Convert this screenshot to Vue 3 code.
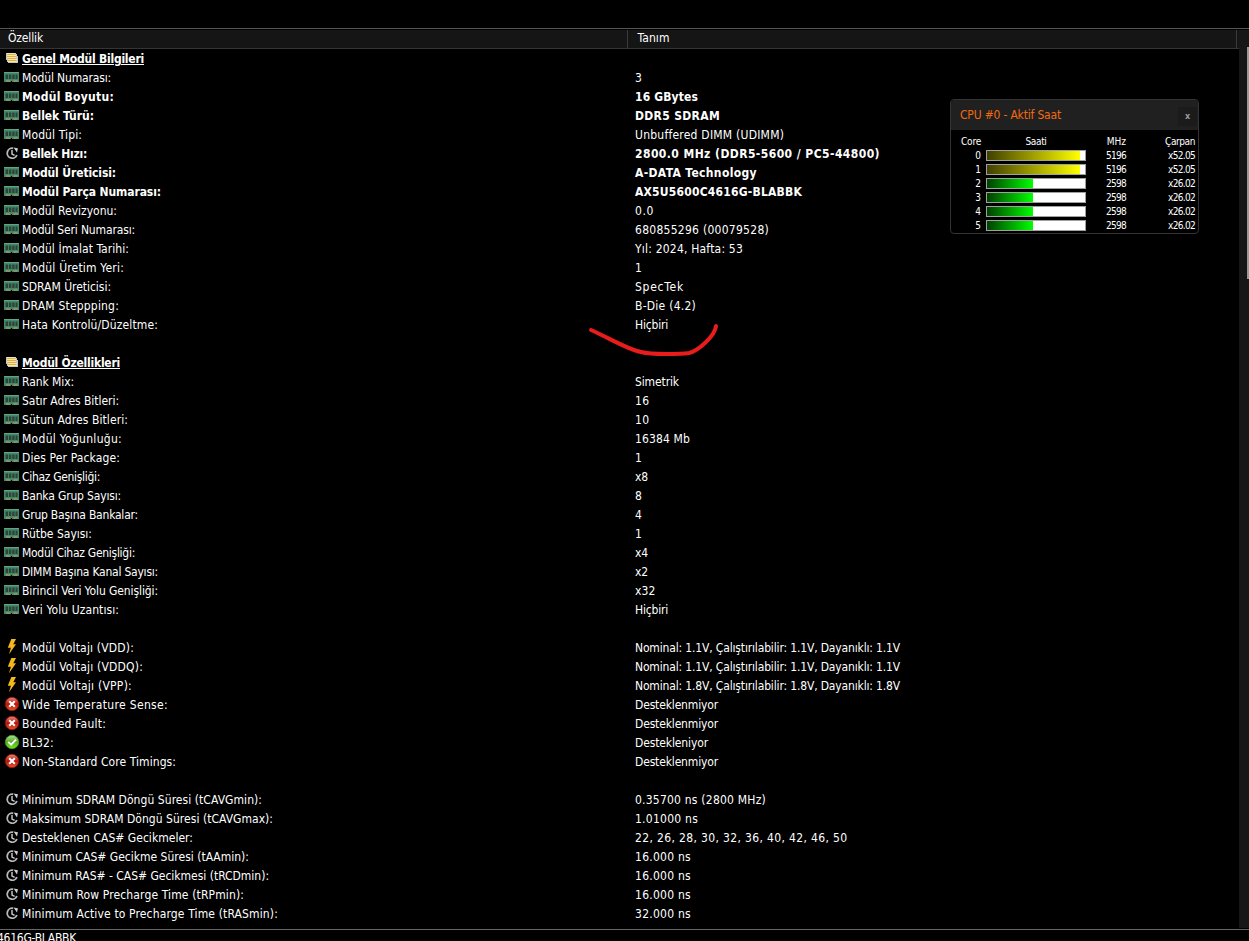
<template>
  <div class="window">
    <svg class="defs" width="0" height="0" aria-hidden="true">
      <defs>
        <linearGradient id="gRed" x1="0" y1="0" x2="0" y2="1">
          <stop offset="0" stop-color="#e48a80" />
          <stop offset="0.5" stop-color="#b81408" />
          <stop offset="1" stop-color="#e05a34" />
        </linearGradient>
        <linearGradient id="gGreen" x1="0" y1="0" x2="0" y2="1">
          <stop offset="0" stop-color="#b0dc9c" />
          <stop offset="0.5" stop-color="#4fae1f" />
          <stop offset="1" stop-color="#72e81c" />
        </linearGradient>
      </defs>
      <symbol id="ico-group" viewBox="0 0 16 16">
        <path d="M2 3h10v1h1v2h1v7H4v-1H3v-2H2z" fill="#c8c6be" />
        <path d="M3 3h8v1H3zM3 5h9v1H3zM3 7h9v1H3zM4 9h9v1H4zM4 11h9v1H4z" fill="#f4e6b4" />
        <path d="M3 4h8v1H3zM3 6h9v1H3zM4 8h8v1H4zM4 10h8v1H4z" fill="#dfb03c" />
      </symbol>
      <symbol id="ico-ram" viewBox="0 0 16 16">
        <path d="M0 3h15v10H8v-1H7v1H0z" fill="#3f8a68" />
        <path d="M0 3h15v1H0z" fill="#5fa582" />
        <path d="M1.6 5.4h2.4v4.6H1.6zM4.9 5.4h2.4v4.6H4.9zM8.2 5.4h2.4v4.6H8.2zM11.5 5.4h2.1v4.6h-2.1z" fill="#33413b" />
        <path d="M2 11.6h4v1H2zM9.5 11.6h4v1h-4z" fill="#d39a5a" />
      </symbol>
      <symbol id="ico-clock" viewBox="0 0 16 16">
        <path d="M9.2 3.3A5 5 0 1 0 12.9 10" fill="none" stroke="#b9b9b9" stroke-width="1.8" />
        <path d="M9.6 2.6L13.9 3.2L13 7.4L11.6 5.6z" fill="#cfcfcf" />
        <path d="M8 5v4l2.6 1.4" fill="none" stroke="#cfcfcf" stroke-width="1.4" />
      </symbol>
      <symbol id="ico-bolt" viewBox="0 0 16 16">
        <path d="M7.3 0H12L9.3 5.2H12L5 15.3l1.9-6.5H3.8z" fill="#f3b81c" />
      </symbol>
      <symbol id="ico-no" viewBox="0 0 16 16">
        <circle cx="8" cy="8" r="6.7" fill="url(#gRed)" stroke="#a31008" stroke-width="0.8" />
        <path d="M5.2 5.2l5.6 5.6M10.8 5.2l-5.6 5.6" stroke="#fff" stroke-width="2" />
      </symbol>
      <symbol id="ico-ok" viewBox="0 0 16 16">
        <circle cx="8" cy="8" r="6.7" fill="url(#gGreen)" stroke="#4a9a25" stroke-width="0.8" />
        <path d="M4.2 7.8l2.9 2.9 4.9-5" fill="none" stroke="#fff" stroke-width="1.9" />
      </symbol>
    </svg>

    <div class="top-bar"></div>

    <div class="main">
      <div class="list">
        <div class="list-header">
          <div class="th th-name"><span v-fit="35">Özellik</span></div>
          <div class="th th-value"><span v-fit="32">Tanım</span></div>
        </div>
        <div class="list-body">
          <div v-for="(row, i) in rows" :key="i" class="row" :class="row.kind">
            <div class="cell-name">
              <svg v-if="row.icon" class="icon"><use :href="'#ico-' + row.icon" /></svg>
              <span v-fit="row.labelWidth" class="label">{{ row.label }}</span>
            </div>
            <div class="cell-value">
              <span v-fit="row.valueWidth">{{ row.value }}</span>
            </div>
          </div>
        </div>
      </div>
      <div class="scrollbar">
        <div class="thumb"></div>
      </div>
    </div>

    <div class="status-bar"><span v-fit="79">4616G-BLABBK</span></div>

    <svg class="marker" width="136" height="38" viewBox="0 0 136 38">
      <path d="M6 9C24 17 42 28 56 31C67 34 97 33 104 32C113 30 130 15 131 5" />
    </svg>

    <div class="clock-panel">
      <div class="panel-header">
        <span class="panel-title"><span v-fit="101">CPU #0 - Aktif Saat</span></span>
        <button class="close">x</button>
      </div>
      <div class="panel-body">
        <div class="core-row">
          <span class="c-core"><span v-fit="20">Core</span></span>
          <span class="c-bar"><span v-fit="21">Saati</span></span>
          <span class="c-mhz">MHz</span>
          <span class="c-mult"><span v-fit="30">Çarpan</span></span>
        </div>
        <div v-for="core in cores" :key="core.id" class="core-row">
          <span class="c-core">{{ core.id }}</span>
          <span class="c-bar">
            <span class="bar">
              <span class="fill" :class="core.color" :style="{ width: core.width + 'px' }"></span>
            </span>
          </span>
          <span class="c-mhz"><span v-fit="20">{{ core.mhz }}</span></span>
          <span class="c-mult"><span v-fit="27">{{ core.mult }}</span></span>
        </div>
      </div>
    </div>
  </div>
</template>

<script setup>
import { ref } from 'vue'

// spreads the letters of a text so that it takes the given width
const vFit = {
  mounted(el, { value }) {
    const length = el.textContent.length
    if (!value || length < 2) return
    const gap = (value - el.getBoundingClientRect().width) / length
    el.style.letterSpacing = gap.toFixed(3) + 'px'
  }
}

const item = (icon, label, labelWidth, value, valueWidth, kind = '') => ({
  icon,
  label,
  labelWidth,
  value,
  valueWidth,
  kind
})
const blank = () => item('', '', 0, '', 0)

const rows = ref([
  item('group', 'Genel Modül Bilgileri', 122, '', 0, 'group'),
  item('ram', 'Modül Numarası:', 89, '3', 0),
  item('ram', 'Modül Boyutu:', 92, '16 GBytes', 63, 'bold'),
  item('ram', 'Bellek Türü:', 72, 'DDR5 SDRAM', 85, 'bold'),
  item('ram', 'Modül Tipi:', 60, 'Unbuffered DIMM (UDIMM)', 149),
  item('clock', 'Bellek Hızı:', 65, '2800.0 MHz (DDR5-5600 / PC5-44800)', 245, 'bold'),
  item('ram', 'Modül Üreticisi:', 94, 'A-DATA Technology', 122, 'bold'),
  item('ram', 'Modül Parça Numarası:', 139, 'AX5U5600C4616G-BLABBK', 167, 'bold'),
  item('ram', 'Modül Revizyonu:', 95, '0.0', 19),
  item('ram', 'Modül Seri Numarası:', 113, '680855296 (00079528)', 134),
  item('ram', 'Modül İmalat Tarihi:', 107, 'Yıl: 2024, Hafta: 53', 108),
  item('ram', 'Modül Üretim Yeri:', 102, '1', 0),
  item('ram', 'SDRAM Üreticisi:', 89, 'SpecTek', 49),
  item('ram', 'DRAM Steppping:', 97, 'B-Die (4.2)', 61),
  item('ram', 'Hata Kontrolü/Düzeltme:', 136, 'Hiçbiri', 33),
  blank(),
  item('group', 'Modül Özellikleri', 98, '', 0, 'group'),
  item('ram', 'Rank Mix:', 52, 'Simetrik', 44),
  item('ram', 'Satır Adres Bitleri:', 97, '16', 14.5),
  item('ram', 'Sütun Adres Bitleri:', 106, '10', 14.5),
  item('ram', 'Modül Yoğunluğu:', 100, '16384 Mb', 55),
  item('ram', 'Dies Per Package:', 98, '1', 0),
  item('ram', 'Cihaz Genişliği:', 78, 'x8', 13),
  item('ram', 'Banka Grup Sayısı:', 99, '8', 0),
  item('ram', 'Grup Başına Bankalar:', 116, '4', 0),
  item('ram', 'Rütbe Sayısı:', 70, '1', 0),
  item('ram', 'Modül Cihaz Genişliği:', 113, 'x4', 13),
  item('ram', 'DIMM Başına Kanal Sayısı:', 136, 'x2', 13),
  item('ram', 'Birincil Veri Yolu Genişliği:', 136, 'x32', 20.5),
  item('ram', 'Veri Yolu Uzantısı:', 97, 'Hiçbiri', 33),
  blank(),
  item('bolt', 'Modül Voltajı (VDD):', 112, 'Nominal: 1.1V, Çalıştırılabilir: 1.1V, Dayanıklı: 1.1V', 265),
  item('bolt', 'Modül Voltajı (VDDQ):', 121, 'Nominal: 1.1V, Çalıştırılabilir: 1.1V, Dayanıklı: 1.1V', 265),
  item('bolt', 'Modül Voltajı (VPP):', 110, 'Nominal: 1.8V, Çalıştırılabilir: 1.8V, Dayanıklı: 1.8V', 265),
  item('no', 'Wide Temperature Sense:', 146, 'Desteklenmiyor', 83),
  item('no', 'Bounded Fault:', 84, 'Desteklenmiyor', 83),
  item('ok', 'BL32:', 32, 'Destekleniyor', 73),
  item('no', 'Non-Standard Core Timings:', 154, 'Desteklenmiyor', 83),
  blank(),
  item('clock', 'Minimum SDRAM Döngü Süresi (tCAVGmin):', 240, '0.35700 ns (2800 MHz)', 131),
  item('clock', 'Maksimum SDRAM Döngü Süresi (tCAVGmax):', 251, '1.01000 ns', 63),
  item('clock', 'Desteklenen CAS# Gecikmeler:', 171, '22, 26, 28, 30, 32, 36, 40, 42, 46, 50', 212.5),
  item('clock', 'Minimum CAS# Gecikme Süresi (tAAmin):', 227, '16.000 ns', 56),
  item('clock', 'Minimum RAS# - CAS# Gecikmesi (tRCDmin):', 247, '16.000 ns', 56),
  item('clock', 'Minimum Row Precharge Time (tRPmin):', 222, '16.000 ns', 56),
  item('clock', 'Minimum Active to Precharge Time (tRASmin):', 256, '32.000 ns', 56)
])

const cores = ref([
  { id: 0, mhz: 5196, mult: 'x52.05', width: 93, color: 'yellow' },
  { id: 1, mhz: 5196, mult: 'x52.05', width: 93, color: 'yellow' },
  { id: 2, mhz: 2598, mult: 'x26.02', width: 46, color: 'green' },
  { id: 3, mhz: 2598, mult: 'x26.02', width: 46, color: 'green' },
  { id: 4, mhz: 2598, mult: 'x26.02', width: 46, color: 'green' },
  { id: 5, mhz: 2598, mult: 'x26.02', width: 46, color: 'green' }
])
</script>

<style>
body {
  background: #000;
  overflow: hidden;
}
</style>

<style scoped>
.window {
  position: relative;
  display: flex;
  flex-direction: column;
  width: 100%;
  height: 941px;
  overflow: hidden;
  background: #000;
  color: #fff;
  font-family: Tahoma, "DejaVu Sans Condensed", "DejaVu Sans", sans-serif;
  font-stretch: condensed;
  font-size: 12px;
  line-height: 19px;
  white-space: pre;
}
.defs {
  position: absolute;
}
.top-bar {
  height: 28px;
  border-bottom: 1px solid #555;
  margin-bottom: 1px;
}
.main {
  display: flex;
  height: 898px;
}
.list {
  flex: 1;
}
.list-header {
  display: flex;
  height: 18px;
  background: #151515;
  border-bottom: 1px solid #353535;
}
.th {
  box-sizing: border-box;
  height: 18px;
  line-height: 16px;
  border-right: 1px solid #3a3a3a;
}
.th-name {
  width: 628px;
  padding-left: 8px;
}
.th-value {
  width: 609px;
  padding-left: 9.5px;
}
.row {
  display: flex;
  height: 19px;
  line-height: 21px;
}
.cell-name {
  display: flex;
  width: 631px;
  padding-left: 4px;
}
.icon {
  width: 16px;
  height: 16px;
  margin: 1px 2px 0 0;
}
.cell-value {
  flex: 1;
}
.bold,
.group {
  font-weight: 700;
}
.group .label {
  text-decoration: underline;
}
.scrollbar {
  display: flex;
  justify-content: flex-end;
  width: 10px;
  background: #171717;
}
.thumb {
  width: 2px;
  height: 232px;
  margin-top: 17px;
  background: #9a9a9a;
}
.status-bar {
  height: 11px;
  margin-top: 1px;
  border-top: 1px solid #666;
  line-height: 17px;
}
.status-bar span {
  margin-left: -3px;
}

/* hand-drawn mark under the error check value */
.marker {
  position: absolute;
  left: 585px;
  top: 321px;
}
.marker path {
  fill: none;
  stroke: #e81c1c;
  stroke-width: 4;
  stroke-linecap: round;
  stroke-linejoin: round;
}

/* floating clock panel */
.clock-panel {
  position: absolute;
  left: 950px;
  top: 99px;
  box-sizing: border-box;
  width: 249px;
  height: 135px;
  border: 1px solid #333;
  border-radius: 4px;
  overflow: hidden;
  background: #000;
}
.panel-header {
  display: flex;
  justify-content: space-between;
  height: 30px;
  background: #202020;
}
.panel-title {
  padding-left: 9px;
  line-height: 30px;
  color: #f26a10;
}
.close {
  width: 19px;
  height: 19px;
  margin: 7px 1px 0 0;
  padding: 0;
  border: none;
  background: #1b1b1b;
  color: #999;
  font-family: inherit;
  font-weight: 700;
  font-size: 9px;
  line-height: 17px;
}
.panel-body {
  padding-top: 5px;
  font-size: 10px;
}
.core-row {
  display: flex;
  height: 14px;
  line-height: 14px;
}
.c-core {
  width: 30px;
  text-align: right;
}
.c-bar {
  width: 100px;
  margin-left: 5px;
  text-align: center;
}
.c-mhz {
  width: 40px;
  text-align: right;
}
.c-mult {
  width: 69px;
  text-align: right;
}
.bar {
  display: block;
  box-sizing: border-box;
  width: 100px;
  height: 11px;
  margin-top: 1px;
  border: 1px solid #a0a0a0;
  background: #fff;
}
.fill {
  display: block;
  height: 9px;
}
.yellow {
  background: linear-gradient(to right, #404000, #ffff00);
}
.green {
  background: linear-gradient(to right, #004000, #00ff00);
}
</style>
